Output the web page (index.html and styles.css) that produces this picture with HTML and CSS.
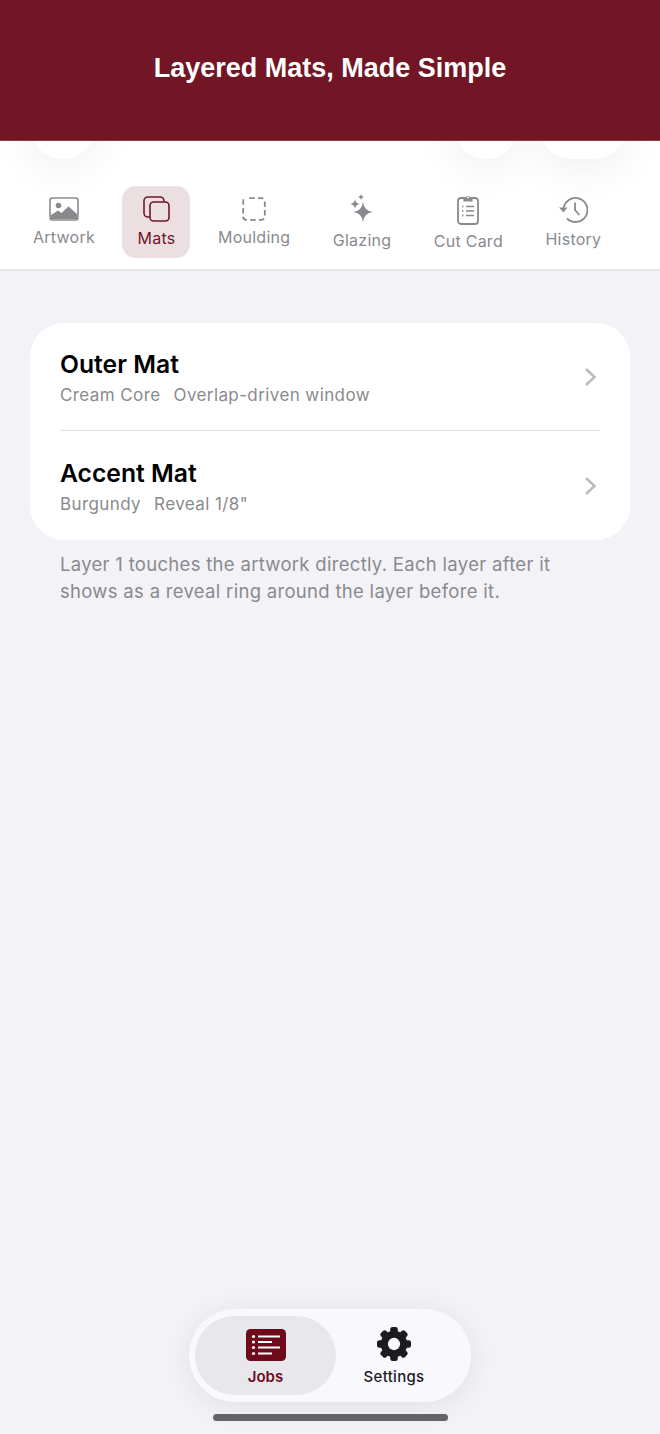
FILE: index.html
```html
<!DOCTYPE html>
<html lang="en">
<head>
    <meta charset="UTF-8">
    <meta name="viewport" content="width=device-width, initial-scale=1.0">
    <title>Layered Mats, Made Simple</title>
    <link rel="stylesheet" href="styles.css">
</head>
<body>

    <header class="banner">
        <h1>Layered Mats, Made Simple</h1>
    </header>

    <nav class="steps">
        <span class="blob blob-left"></span>
        <span class="blob blob-mid"></span>
        <span class="blob blob-right"></span>

        <a class="step">
            <svg width="30" height="24" viewBox="0 0 30 24">
                <rect x="1" y="1" width="28" height="22" rx="2.5" fill="#fff" stroke="#8a8a8e" stroke-width="1.6"/>
                <circle cx="9.5" cy="8.5" r="2.8" fill="#8a8a8e"/>
                <path d="M2 22 V18 L9 13.5 L12.5 16 L19.5 9.5 L28 17 V22 Z" fill="#8a8a8e"/>
            </svg>
            <span>Artwork</span>
        </a>
        <a class="step step-active">
            <svg width="27" height="26" viewBox="0 0 27 26">
                <rect x="1" y="1" width="20" height="20" rx="4" fill="none" stroke="#72162a" stroke-width="1.6"/>
                <rect x="7" y="6" width="19" height="19" rx="3.5" fill="#ecdfe2" stroke="#72162a" stroke-width="1.6"/>
            </svg>
            <span>Mats</span>
        </a>
        <a class="step">
            <svg width="24" height="24" viewBox="0 0 24 24">
                <rect x="1.2" y="1.2" width="21.6" height="21.6" rx="3" fill="none" stroke="#8a8a8e" stroke-width="1.8" stroke-dasharray="5.5 3.2" stroke-dashoffset="-3"/>
            </svg>
            <span>Moulding</span>
        </a>
        <a class="step">
            <svg width="24" height="30" viewBox="0 0 24 30">
                <path d="M13 8 Q14 17 23 18 Q14 19 13 28 Q12 19 3 18 Q12 17 13 8 Z" fill="#8a8a8e"/>
                <path d="M5 5 Q5.5 9.5 10 10 Q5.5 10.5 5 15 Q4.5 10.5 0 10 Q4.5 9.5 5 5 Z" fill="#8a8a8e"/>
                <path d="M11 0 Q11.3 2.7 14 3 Q11.3 3.3 11 6 Q10.7 3.3 8 3 Q10.7 2.7 11 0 Z" fill="#8a8a8e"/>
            </svg>
            <span>Glazing</span>
        </a>
        <a class="step">
            <svg width="22" height="31" viewBox="0 0 22 31">
                <rect x="1" y="4" width="20" height="26" rx="3" fill="none" stroke="#8a8a8e" stroke-width="1.8"/>
                <path d="M7 7 V4.5 H9 A2 2 0 0 1 13 4.5 H15 V7 Z" fill="#8a8a8e" stroke="#8a8a8e" stroke-width="1.2"/>
                <circle cx="11" cy="3.5" r="1" fill="#fff"/>
                <path d="M9 12.5 H17 M9 17 H17 M9 21.5 H17" stroke="#8a8a8e" stroke-width="1.5"/>
                <path d="M5 12.5 H6.5 M5 17 H6.5 M5 21.5 H6.5" stroke="#8a8a8e" stroke-width="1.5"/>
            </svg>
            <span>Cut Card</span>
        </a>
        <a class="step">
            <svg width="29" height="27" viewBox="0 0 29 27">
                <path d="M4.5 13 A12 12 0 1 1 8 22.5" fill="none" stroke="#8a8a8e" stroke-width="1.8"/>
                <path d="M0 11.5 H8.5 L4.5 16.5 Z" fill="#8a8a8e"/>
                <path d="M16 6.5 V14 L20.5 19" fill="none" stroke="#8a8a8e" stroke-width="1.8"/>
            </svg>
            <span>History</span>
        </a>
    </nav>

    <main class="content">
        <section class="card">
            <a class="row">
                <div class="row-text">
                    <h2>Outer Mat</h2>
                    <p><span>Cream Core</span><span>Overlap-driven window</span></p>
                </div>
                <svg class="chevron" width="13" height="20" viewBox="0 0 13 20">
                    <path d="M2 2 L10.5 10 L2 18" fill="none" stroke="#bcbcc0" stroke-width="2.6"/>
                </svg>
            </a>
            <a class="row">
                <div class="row-text">
                    <h2>Accent Mat</h2>
                    <p><span>Burgundy</span><span>Reveal 1/8"</span></p>
                </div>
                <svg class="chevron" width="13" height="20" viewBox="0 0 13 20">
                    <path d="M2 2 L10.5 10 L2 18" fill="none" stroke="#bcbcc0" stroke-width="2.6"/>
                </svg>
            </a>
        </section>
        <p class="note">Layer 1 touches the artwork directly. Each layer after it shows as a reveal ring around the layer before it.</p>
    </main>

    <footer class="dock">
        <div class="tabbar">
            <a class="tab tab-active">
                <svg width="40" height="32" viewBox="0 0 40 32">
                    <rect width="40" height="32" rx="4.5" fill="#6e0a1c"/>
                    <g fill="#fff">
                        <circle cx="7.5" cy="7.5" r="1.6"/>
                        <circle cx="7.5" cy="13" r="1.6"/>
                        <circle cx="7.5" cy="18.5" r="1.6"/>
                        <circle cx="7.5" cy="24.5" r="1.6"/>
                        <rect x="12" y="6.5" width="22" height="2"/>
                        <rect x="12" y="12" width="14" height="2"/>
                        <rect x="12" y="17.5" width="22" height="2"/>
                        <rect x="12" y="23.5" width="14" height="2"/>
                    </g>
                </svg>
                <span>Jobs</span>
            </a>
            <a class="tab">
                <svg class="gear" width="36" height="34" viewBox="0 0 36 36">
                    <g fill="#1c1c1e">
                        <circle cx="18" cy="18" r="14"/>
                        <rect x="14" y="0" width="8" height="36" rx="2.5"/>
                        <rect x="14" y="0" width="8" height="36" rx="2.5" transform="rotate(45 18 18)"/>
                        <rect x="14" y="0" width="8" height="36" rx="2.5" transform="rotate(90 18 18)"/>
                        <rect x="14" y="0" width="8" height="36" rx="2.5" transform="rotate(135 18 18)"/>
                    </g>
                    <circle cx="18" cy="18" r="6.5" fill="#f9f9fd"/>
                </svg>
                <span>Settings</span>
            </a>
        </div>
        <div class="home-bar"></div>
    </footer>

</body>
</html>
```

FILE: styles.css
```css
* {
    box-sizing: border-box;
}

body {
    margin: 0;
    height: 1434px;
    display: flex;
    flex-direction: column;
    overflow: hidden;
    font-family: Inter, "Noto Sans", sans-serif;
    background-color: #f2f2f7;
}

.banner {
    height: 141px;
    padding-bottom: 4px;
    display: flex;
    align-items: center;
    justify-content: center;
    background-color: #721625;
    border-bottom: 1px solid #8a3a48;
}

.banner h1 {
    margin: 0;
    color: #fff;
    font-family: "Liberation Sans", Arial, sans-serif;
    font-size: 27px;
    font-weight: bold;
}

/* step strip */
.steps {
    position: relative;
    height: 130px;
    padding: 45px 0 0 33px;
    display: flex;
    align-items: flex-start;
    gap: 42.5px;
    overflow: hidden;
    background-color: #fff;
    border-bottom: 2px solid #e6e6eb;
}

.blob {
    position: absolute;
    top: -50px;
    height: 68px;
    border-radius: 34px;
    background-color: #fff;
    box-shadow: 0 8px 44px rgba(0, 0, 0, 0.07);
}

.blob-left {
    left: 30px;
    width: 66px;
}

.blob-mid {
    left: 455px;
    width: 62px;
}

.blob-right {
    left: 538px;
    width: 90px;
}

.step {
    position: relative;
    height: 72px;
    display: flex;
    flex-direction: column;
    align-items: center;
    justify-content: center;
    gap: 6px;
    color: #8a8a8e;
    font-size: 16px;
    letter-spacing: 0.25px;
    line-height: 20px;
    white-space: nowrap;
}

.step svg {
    display: block;
}

.step-active {
    margin: 0 -15px;
    padding: 0 15px;
    border-radius: 14px;
    background-color: #ecdfe2;
    color: #72162a;
}

/* mats list */
.content {
    flex: 1;
    padding: 52px 30px 0;
}

.card {
    background-color: #fff;
    border-radius: 34px;
    overflow: hidden;
}

.row {
    height: 107px;
    margin: 0 30px;
    padding-top: 2px;
    display: flex;
    align-items: center;
    justify-content: space-between;
}

.row + .row {
    height: 110px;
    border-top: 1px solid #e0e0e4;
}

.row h2 {
    margin: 0 0 5px;
    color: #000;
    font-size: 24.7px;
    font-weight: 600;
    line-height: 30px;
}

.row p {
    margin: 0;
    display: flex;
    gap: 13px;
    color: #8a8a8e;
    font-size: 17px;
    letter-spacing: 0.4px;
    line-height: 22px;
}

.chevron {
    margin: -2px 3px 0 0;
}

.note {
    margin: 11px 30px 0;
    color: #8a8a8e;
    font-size: 18.5px;
    letter-spacing: 0.3px;
    line-height: 27px;
}

/* bottom tabs */
.dock {
    height: 125px;
    display: flex;
    flex-direction: column;
    align-items: center;
}

.tabbar {
    width: 282px;
    height: 93px;
    padding: 7px 6px;
    display: flex;
    border-radius: 47px;
    background-color: #f9f9fd;
    box-shadow: 0 4px 30px rgba(0, 0, 0, 0.08);
}

.tab {
    width: 116px;
    padding-top: 4px;
    display: flex;
    flex-direction: column;
    align-items: center;
    justify-content: center;
    gap: 6px;
    color: #1c1c1e;
    font-size: 15px;
    font-weight: 500;
    letter-spacing: 0.3px;
    line-height: 20px;
}

.gear {
    margin-top: -2px;
}

.tab-active {
    width: 141px;
    border-radius: 40px;
    background-color: #e8e8ec;
    color: #6e0a1c;
    font-weight: 600;
    letter-spacing: 0;
}

.home-bar {
    width: 235px;
    height: 7px;
    margin-top: 12px;
    border-radius: 4px;
    background-color: #636369;
}
```
